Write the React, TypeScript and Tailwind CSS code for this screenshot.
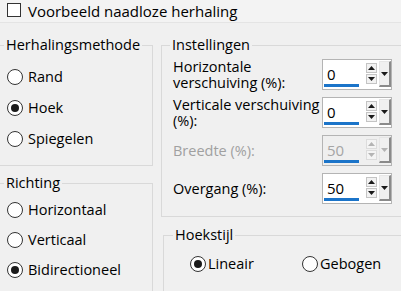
import React from 'react';

const font = { fontFamily: '"Open Sans", "Noto Sans", sans-serif' };

function Radio({ checked, label, gap = 'ml-[5px]' }: { checked?: boolean; label: string; gap?: string }) {
  return (
    <div className="flex items-center">
      <span className="flex h-[16px] w-[16px] shrink-0 items-center justify-center rounded-full border border-[#333] bg-white">
        {checked && <span className="h-[8px] w-[8px] rounded-full bg-[#1a1a1a]" />}
      </span>
      <span className={`${gap} text-[14.5px] leading-[16px] text-black`}>{label}</span>
    </div>
  );
}

function Tri({ dir, color }: { dir: 'up' | 'down'; color: string }) {
  return (
    <svg width="7" height="4" viewBox="0 0 7 4">
      <path d={dir === 'up' ? 'M0 4 L3.5 0 L7 4 Z' : 'M0 0 L7 0 L3.5 4 Z'} fill={color} />
    </svg>
  );
}

function Spin({ value, disabled }: { value: string; disabled?: boolean }) {
  const fg = disabled ? '#b4b4b4' : '#1a1a1a';
  const btn = disabled ? 'border-[#dcdcdc] bg-[#f4f4f4]' : 'border-[#c4c4c4] bg-[#f2f2f2]';
  return (
    <div className={`flex h-[31px] w-[70px] border border-[#b4b4b4] ${disabled ? 'bg-[#efefef]' : 'bg-white'}`}>
      <div className="relative w-[41px]">
        <span className={`absolute left-[4px] top-[6px] text-[15px] leading-[16px] ${disabled ? 'text-[#a5a5a5]' : 'text-black'}`}>{value}</span>
        <div className="absolute bottom-[2px] left-[1px] h-[3px] w-[35px] bg-[#1b74c9]" />
      </div>
      <div className="flex w-[14px] flex-col items-center gap-[1px] pt-[3px]">
        <div className={`flex h-[10px] w-[11px] items-center justify-center border ${btn}`}>
          <Tri dir="up" color={fg} />
        </div>
        <div className={`flex h-[10px] w-[11px] items-center justify-center border ${btn}`}>
          <Tri dir="down" color={fg} />
        </div>
      </div>
      <div className="mb-[2px] ml-[1px] mt-[1px] flex w-[12px] items-center justify-center border-b-2 border-l border-r-2 border-t border-b-[#8a8a8a] border-l-[#e6e6e6] border-r-[#8a8a8a] border-t-[#e6e6e6] bg-[#f0f0f0]">
        <Tri dir="down" color={fg} />
      </div>
    </div>
  );
}

function Row({ lines, children, muted }: { lines: string[]; children: React.ReactNode; muted?: boolean }) {
  return (
    <div className="flex h-[31px] items-center">
      <div className={`flex w-[149px] flex-col whitespace-nowrap text-[14.5px] leading-[16px] ${muted ? 'text-[#a0a0a0]' : 'text-black'}`}>
        {lines.map(l => <div key={l}>{l}</div>)}
      </div>
      {children}
    </div>
  );
}

export default function App() {
  return (
    <div className="relative h-[291px] w-[401px] overflow-hidden bg-[#f0f0f0]" style={font}>
      <div className="flex h-[23px] items-start border-b border-[#e4e4e4] bg-[#f3f3f3] pl-[7px] pt-[3px]">
        <span className="h-[14px] w-[14px] border border-[#333] bg-white" />
        <span className="ml-[7px] text-[15px] leading-[16px] text-black">Voorbeeld naadloze herhaling</span>
      </div>

      <div className="flex pt-[14px]">
        <div className="-ml-[2px] w-[155px] shrink-0">
          <fieldset className="border border-[#d9d9d9] pb-[11px] pt-[8px]">
            <legend className="ml-[5px] px-[2px] text-[14.5px] leading-[16px] text-black">Herhalingsmethode</legend>
            <div className="flex flex-col pl-[8px]">
              <div className="flex h-[31px] items-center"><Radio label="Rand" /></div>
              <div className="flex h-[31px] items-center"><Radio checked label="Hoek" /></div>
              <div className="flex h-[31px] items-center"><Radio label="Spiegelen" /></div>
            </div>
          </fieldset>
          <fieldset className="mt-[9px] h-[140px] border border-[#d9d9d9] pt-[4px]">
            <legend className="ml-[5px] px-[2px] text-[14.5px] leading-[16px] text-black">Richting</legend>
            <div className="flex flex-col pl-[8px]">
              <div className="flex h-[30px] items-center"><Radio label="Horizontaal" /></div>
              <div className="flex h-[30px] items-center"><Radio label="Verticaal" /></div>
              <div className="flex h-[30px] items-center"><Radio checked label="Bidirectioneel" /></div>
            </div>
          </fieldset>
        </div>

        <div className="ml-[8px] w-[260px] shrink-0">
          <fieldset className="border border-[#d9d9d9] pb-[12px] pl-[11px] pt-[6px]">
            <legend className="ml-[-3px] px-[2px] text-[14.5px] leading-[16px] text-black">Instellingen</legend>
            <div className="flex flex-col gap-[7px]">
              <Row lines={['Horizontale', 'verschuiving (%):']}><Spin value="0" /></Row>
              <Row lines={['Verticale verschuiving', '(%):']}><Spin value="0" /></Row>
              <Row lines={['Breedte (%):']} muted><Spin value="50" disabled /></Row>
              <Row lines={['Overgang (%):']}><Spin value="50" /></Row>
            </div>
          </fieldset>
          <fieldset className="ml-[2px] mt-[10px] h-[100px] border border-[#d9d9d9] pl-[26px] pt-[13px]">
            <legend className="ml-[-17px] px-[2px] text-[14.5px] leading-[16px] text-black">Hoekstijl</legend>
            <div className="flex">
              <div className="w-[112px]"><Radio checked label="Lineair" gap="ml-[2px]" /></div>
              <Radio label="Gebogen" gap="ml-[2px]" />
            </div>
          </fieldset>
        </div>
      </div>
    </div>
  );
}
